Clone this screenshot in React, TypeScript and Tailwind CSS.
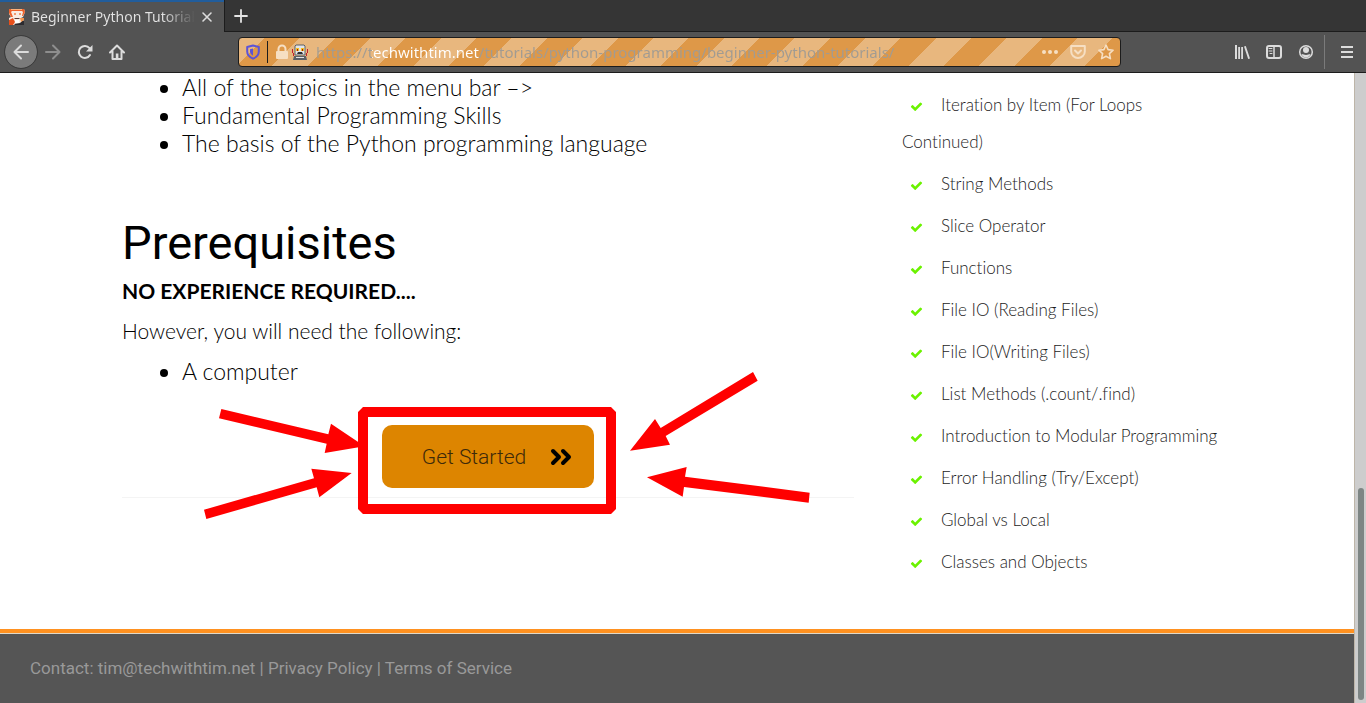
import React from "react";

const skills = [
  "All of the topics in the menu bar –>",
  "Fundamental Programming Skills",
  "The basis of the Python programming language",
];

const topics = [
  "Iteration by Item (For Loops Continued)",
  "String Methods",
  "Slice Operator",
  "Functions",
  "File IO (Reading Files)",
  "File IO(Writing Files)",
  "List Methods (.count/.find)",
  "Introduction to Modular Programming",
  "Error Handling (Try/Except)",
  "Global vs Local",
  "Classes and Objects",
];

function Favicon() {
  return (
    <svg viewBox="0 0 16 16" className="size-4 shrink-0" aria-hidden="true">
      <path d="M0 0h15l1 3-2 5-2 1 3 1v6H2l-2-1V9l2-1L0 5z" fill="#f9ece2" />
      <path d="M0 0h15l1 3-2 4h-1l1-4-1-1H3L2 3l2 5H2L0 4z" fill="#f0622a" />
      <path d="M2 0h11v1H2z" fill="#ffb27a" />
      <path d="M5 4h2v2H5zM10 4h2v2h-2z" fill="#f19a70" />
      <path d="M5 9h6l-1 1H6z" fill="#5a3a35" />
      <path d="M0 11l4-2 2 4-2 3H0z" fill="#e8501c" />
      <path d="M6 11h4v3H6z" fill="#fff" />
      <path d="M5 15l6-1 3-3 1 1v4H6z" fill="#2c2b30" />
      <path d="M11 9h4v2l-3 2z" fill="#f7974d" />
    </svg>
  );
}

function Robot() {
  return (
    <svg viewBox="0 0 16 16" className="size-4 shrink-0" aria-hidden="true">
      <path d="M0 5h1v4h1v3H1V9H0zM15 5h1v4h-1v3h-1V9h1z" fill="#c4202c" />
      <path d="M3 2l1-1h8l1 1v9H3z" fill="#e4e4e4" stroke="#5b6066" />
      <path d="M4 4h3v3H4zM9 4h3v3H9z" fill="#f7c21c" />
      <path d="M5 5h1v2H5zM10 5h1v2h-1z" fill="#9c1a1a" />
      <path d="M6 8h4l1 2H5z" fill="#2d2f33" />
      <path d="M2 12h12l1 4H1z" fill="#5b6066" />
      <path d="M4 13h8v1H4z" fill="#e4e4e4" />
    </svg>
  );
}

const stroke = {
  fill: "none",
  stroke: "currentColor",
  strokeWidth: 2,
  strokeLinecap: "round" as const,
  strokeLinejoin: "round" as const,
};

function Icon({ children }: { children: React.ReactNode }) {
  return (
    <svg viewBox="0 0 16 16" className="size-4 shrink-0" aria-hidden="true">
      {children}
    </svg>
  );
}

function TabStrip() {
  return (
    <div className="flex h-8 border-b border-[#1c1c1c] bg-[#353535]">
      <div className="-mb-px flex w-56 items-center border-t-2 border-[#215d9c] bg-[#535353] px-[9px]">
        <Favicon />
        <span className="ml-1.5 mr-1 min-w-0 flex-1 overflow-hidden whitespace-nowrap bg-linear-to-r from-[#e4e4e4] from-80% to-transparent bg-clip-text text-sm text-transparent">
          Beginner Python Tutorials
        </span>
        <button aria-label="Close tab" className="text-[#dcdcdc]">
          <Icon>
            <path d="M4 4l8 8M12 4l-8 8" {...stroke} strokeWidth={1.6} />
          </Icon>
        </button>
      </div>
      <button
        aria-label="New tab"
        className="flex w-8 items-center justify-center border-l border-[#1c1c1c] text-[#e4e4e4]"
      >
        <Icon>
          <path d="M8 2v12M2 8h12" {...stroke} strokeWidth={1.8} />
        </Icon>
      </button>
    </div>
  );
}

function NavBar() {
  return (
    <div className="flex h-[41px] items-center border-b border-[#1c1c1c] bg-[#535353] pl-[5px] text-[#dcdcdc]">
      <div className="flex items-center gap-4">
        <button
          aria-label="Back"
          className="flex size-8 items-center justify-center rounded-full bg-[#7b7b7b] outline outline-[#3c3c3c]"
        >
          <Icon>
            <path d="M15 8H1.5M8 1.5L1.5 8L8 14.5" {...stroke} />
          </Icon>
        </button>
        <button aria-label="Forward" className="-ml-2 text-[#8e8e8e]">
          <Icon>
            <path d="M1 8h13.5M8 1.5L14.5 8L8 14.5" {...stroke} />
          </Icon>
        </button>
        <button aria-label="Reload">
          <Icon>
            <path d="M13 11A6 6 0 1 1 12.5 4.2" {...stroke} />
            <path d="M15.5 1v6.5H9z" fill="currentColor" />
          </Icon>
        </button>
        <button aria-label="Home">
          <Icon>
            <path d="M1 8.5L8 1.5L15 8.5M3.5 7.5V15h9V7.5" {...stroke} />
            <path d="M6.8 15V9.5h2.6V15z" fill="currentColor" />
          </Icon>
        </button>
      </div>
      <div className="ml-[113px] mr-[113px] flex h-[30px] flex-1 items-center rounded border border-[#1c1c1c] bg-[repeating-linear-gradient(135deg,#e8b77e_0_18px,#de9848_18px_43px,#e8b77e_43px_50px)] px-1.5 text-[#f6dfc3]">
        <button aria-label="Tracking protection" className="text-[#5b53d8]">
          <Icon>
            <path d="M8 1.5l5.8 1.5v4.5c0 3.5-2.5 5.8-5.8 7.2c-3.3-1.4-5.8-3.7-5.8-7.2V3z" {...stroke} />
            <path d="M8 4.5v7.2C6 10.5 5 9.2 5 7.3V5.2z" fill="currentColor" />
          </Icon>
        </button>
        <span className="mx-1.5 h-[22px] w-px bg-[#1c1c1c]" />
        <Icon>
          <path d="M4.5 8V5a3.5 3.5 0 0 1 7 0v3" {...stroke} />
          <rect x="2" y="7" width="12" height="8" rx="1" fill="currentColor" />
        </Icon>
        <span className="ml-0.5">
          <Robot />
        </span>
        <input
          aria-label="Address"
          readOnly
          value="https://techwithtim.net/tutorials/python-programming/beginner-python-tutorials/"
          className="ml-2 min-w-0 flex-1 bg-[linear-gradient(90deg,#a19b92_0_56px,#ffffff_56px_163px,#a19b92_163px)] bg-clip-text text-[15px] text-transparent outline-none"
        />
        <div className="flex items-center gap-3">
          <button aria-label="Page actions">
            <Icon>
              <circle cx="2" cy="8" r="2" fill="currentColor" />
              <circle cx="8" cy="8" r="2" fill="currentColor" />
              <circle cx="14" cy="8" r="2" fill="currentColor" />
            </Icon>
          </button>
          <button aria-label="Save to Pocket">
            <Icon>
              <path d="M1.2 2h13.6v5.5a6.8 6.5 0 0 1-13.6 0zM5 6.5l3 3l3-3" {...stroke} />
            </Icon>
          </button>
          <button aria-label="Bookmark this page">
            <Icon>
              <path d="M8 1l2.1 4.6l5 .6l-3.7 3.4l1 5L8 12.2l-4.4 2.4l1-5L.9 6.2l5-.6z" {...stroke} strokeWidth={1.6} />
            </Icon>
          </button>
        </div>
      </div>
      <div className="flex items-center gap-4">
        <button aria-label="Library">
          <Icon>
            <path d="M1 1h2v14H1zM4.2 3H6v12H4.2zM7.2 3H9v12H7.2zM10 2.5l1.8-.6L16 14.5l-1.8.6z" fill="currentColor" />
          </Icon>
        </button>
        <button aria-label="Sidebars">
          <Icon>
            <rect x="1" y="2" width="14" height="12" rx="2" {...stroke} />
            <path d="M8 2v12" {...stroke} strokeWidth={1.5} />
            <path d="M3 4.5h3M3 7h3M4 9.5h2" {...stroke} strokeWidth={1} />
          </Icon>
        </button>
        <button aria-label="Account">
          <Icon>
            <circle cx="8" cy="8" r="6.3" {...stroke} strokeWidth={1.5} />
            <circle cx="8" cy="6" r="3" fill="currentColor" />
            <path d="M3.5 10c2 0 2.5 1 4.5 1s2.5-1 4.5-1c-.5 2-2.3 3.5-4.5 3.5S4 12 3.5 10z" fill="currentColor" />
          </Icon>
        </button>
      </div>
      <div className="ml-2.5 flex h-[34px] items-center border-l border-[#7b7b7b] pl-3.5 pr-[11px]">
        <button aria-label="Menu">
          <Icon>
            <path d="M2 2h12v2H2zM2 7h12v2H2zM2 12h12v2H2z" fill="currentColor" />
          </Icon>
        </button>
      </div>
    </div>
  );
}

function Annotations() {
  return (
    <svg
      viewBox="0 0 1890 540"
      className="pointer-events-none absolute -left-[191px] -top-[65px] h-[180px] w-[630px] max-w-none"
      fill="#ff0000"
      aria-hidden="true"
    >
      <path d="M91 147L412 223L420 191L515 255L503 262L401 279L407 251L84 175z" />
      <path d="M39 449L369 355L361 326L482 339L385 412L377 382L46 477z" />
      <path d="M1686 36L1700 62L1424 228L1437 254L1317 272L1392 177L1409 204z" />
      <path d="M1856 398L1853 428L1479 381L1475 410L1368 352L1487 321L1482 350z" />
      <path d="M516 156H1260V447H516z" fill="none" stroke="#ff0000" strokeWidth="30" strokeLinejoin="bevel" />
    </svg>
  );
}

function Article() {
  return (
    <article className="min-w-0 flex-1 text-[21px] leading-7 text-black">
      <ul className="list-disc pl-[60px] text-[23px] leading-7">
        {skills.map((s) => (
          <li key={s}>{s}</li>
        ))}
      </ul>
      <h1 className="mt-[58px] font-[Roboto,sans-serif] text-[47px] font-normal leading-[56px]">Prerequisites</h1>
      <p className="mt-1.5 font-bold">NO EXPERIENCE REQUIRED....</p>
      <p className="mt-3">However, you will need the following:</p>
      <ul className="mt-3 list-disc pl-[60px] text-[23px] leading-7">
        <li>A computer</li>
      </ul>
      <div className="mt-10 flex justify-center border-b border-[#f4f4f4] pb-[9px]">
        <div className="relative">
          <button className="flex h-[63px] items-center gap-6 rounded-[10px] bg-[#dd8500] pl-10 pr-[22px] font-[Roboto,sans-serif] font-light text-[#3d2a0a]">
            Get Started
            <svg viewBox="0 0 22 18" className="h-[18px] w-[22px]" fill="none" stroke="#000000" strokeWidth="4" strokeLinecap="round" strokeLinejoin="round" aria-hidden="true">
              <path d="M3 3l6 6l-6 6M13 3l6 6l-6 6" />
            </svg>
          </button>
          <Annotations />
        </div>
      </div>
    </article>
  );
}

function Check() {
  return (
    <svg viewBox="0 0 1792 1792" className="ml-2 mr-[18px] inline size-[13px] text-[#6bf200]" fill="currentColor" aria-hidden="true">
      <path d="M1671 566q0 40-28 68l-724 724-136 136q-28 28-68 28t-68-28l-136-136-362-362q-28-28-28-68t28-68l136-136q28-28 68-28t68 28l294 295 656-657q28-28 68-28t68 28l136 136q28 28 28 68z" />
    </svg>
  );
}

function Topics() {
  return (
    <aside className="w-[330px] shrink-0 pr-3.5 pt-[13px]">
      <ul className="flex flex-col gap-[5px] text-[17px] leading-[37px] text-[#1c1c1c]">
        {topics.map((t) => (
          <li key={t}>
            <Check />
            <a href="#topic">{t}</a>
          </li>
        ))}
      </ul>
    </aside>
  );
}

export default function App() {
  return (
    <div className="flex min-h-screen flex-col bg-white font-['Noto_Sans',sans-serif]">
      <header>
        <TabStrip />
        <NavBar />
      </header>
      <div className="flex flex-1">
        <div className="flex min-w-0 flex-1 flex-col [font-variant-ligatures:none]">
          <main className="mx-auto flex w-full max-w-[1110px] flex-1 gap-12 pb-10 font-[Lato,sans-serif] font-light">
            <Article />
            <Topics />
          </main>
          <footer className="border-t-4 border-[#ff9120] bg-[#555555] font-[Roboto,sans-serif] text-[17px] leading-6 text-[#999999]">
            <div className="border-t border-[#e0d8c8] px-[30px] pb-[23px] pt-[22px]">
              Contact: tim@techwithtim.net | <a href="#privacy">Privacy Policy</a> | <a href="#terms">Terms of Service</a>
            </div>
          </footer>
        </div>
        <div className="flex w-3 items-end justify-center border-l border-[#bdb5a8] bg-[#cdcdcd] pb-[3px]" aria-hidden="true">
          <div className="h-[212px] w-1.5 rounded-full bg-[#7d8584]" />
        </div>
      </div>
    </div>
  );
}
